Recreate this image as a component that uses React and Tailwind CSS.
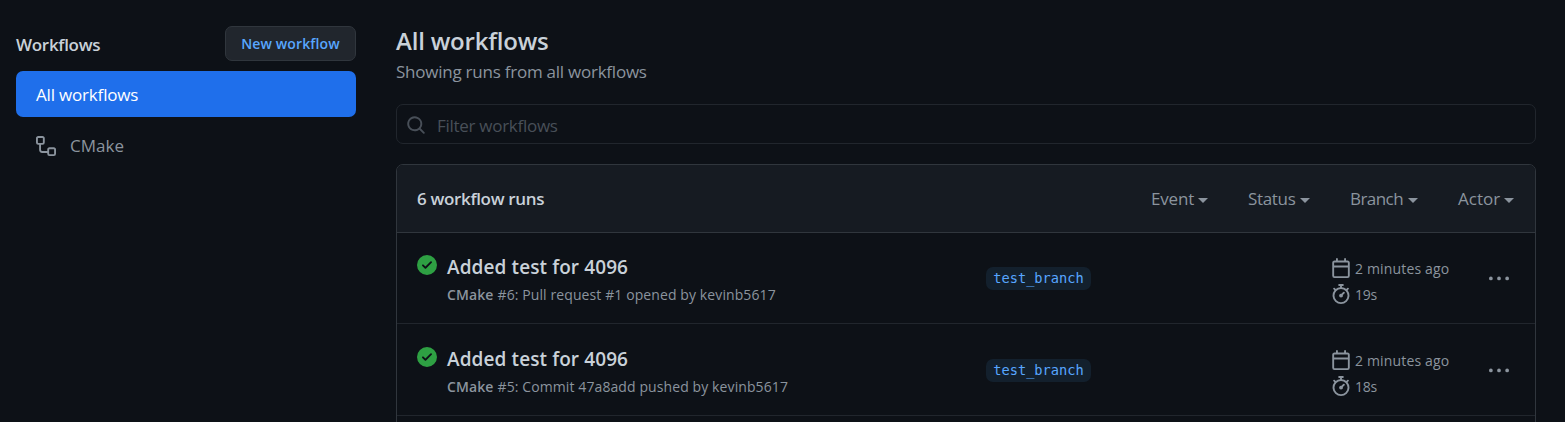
import React from 'react';

const ICONS = {
  workflow:
    'M0 1.75C0 .784.784 0 1.75 0h3.5C6.216 0 7 .784 7 1.75v3.5A1.75 1.75 0 015.25 7H4v4a1 1 0 001 1h4v-1.25C9 9.784 9.784 9 10.75 9h3.5c.966 0 1.75.784 1.75 1.75v3.5A1.75 1.75 0 0114.25 16h-3.5A1.75 1.75 0 019 14.25v-.75H5A2.5 2.5 0 012.5 11V7h-.75A1.75 1.75 0 010 5.25v-3.5zm1.75-.25a.25.25 0 00-.25.25v3.5c0 .138.112.25.25.25h3.5a.25.25 0 00.25-.25v-3.5a.25.25 0 00-.25-.25h-3.5zm9 9a.25.25 0 00-.25.25v3.5c0 .138.112.25.25.25h3.5a.25.25 0 00.25-.25v-3.5a.25.25 0 00-.25-.25h-3.5z',
  search:
    'M11.5 7a4.499 4.499 0 11-8.998 0A4.499 4.499 0 0111.5 7zm-.82 4.74a6 6 0 111.06-1.06l3.04 3.04a.75.75 0 11-1.06 1.06l-3.04-3.04z',
  success:
    'M8 16A8 8 0 108 0a8 8 0 000 16zm3.78-9.72a.75.75 0 00-1.06-1.06L6.75 9.19 5.28 7.72a.75.75 0 00-1.06 1.06l2 2a.75.75 0 001.06 0l4.5-4.5z',
  calendar:
    'M4.75 0a.75.75 0 01.75.75V2h5V.75a.75.75 0 011.5 0V2h1.25c.966 0 1.75.784 1.75 1.75v10.5A1.75 1.75 0 0113.25 16H2.75A1.75 1.75 0 011 14.25V3.75C1 2.784 1.784 2 2.75 2H4V.75A.75.75 0 014.75 0zm0 3.5h-2a.25.25 0 00-.25.25V6h11V3.75a.25.25 0 00-.25-.25h-8.5zM2.5 7.5v6.75c0 .138.112.25.25.25h10.5a.25.25 0 00.25-.25V7.5h-11z',
  stopwatch:
    'M5.75.75A.75.75 0 016.5 0h3a.75.75 0 010 1.5h-.75v1l-.001.041a6.718 6.718 0 013.464 1.435l.007-.006.75-.75a.75.75 0 111.06 1.06l-.75.75-.006.007a6.75 6.75 0 11-10.548 0L2.72 5.03l-.75-.75a.75.75 0 011.06-1.06l.75.75.007.006A6.718 6.718 0 017.25 2.541a.756.756 0 010-.041v-1H6.5a.75.75 0 01-.75-.75zM8 14.5A5.25 5.25 0 108 4a5.25 5.25 0 000 10.5zm.389-6.7l1.33-1.33a.75.75 0 111.061 1.06L9.45 8.861A1.502 1.502 0 018 10.75a1.5 1.5 0 11.389-2.95z',
  kebab:
    'M8 9a1.5 1.5 0 100-3 1.5 1.5 0 000 3zM1.5 9a1.5 1.5 0 100-3 1.5 1.5 0 000 3zm13 0a1.5 1.5 0 100-3 1.5 1.5 0 000 3z',
};

function Icon({ name, className = '' }) {
  return (
    <svg viewBox="0 0 16 16" fill="currentColor" fillRule="evenodd" aria-hidden="true" className={`size-5 shrink-0 ${className}`}>
      <path d={ICONS[name]} />
    </svg>
  );
}

const FILTERS = [
  { label: 'Event', className: 'w-[57px] tracking-[-0.19px]' },
  { label: 'Status', className: 'w-[62px] tracking-[-0.32px]' },
  { label: 'Branch', className: 'w-[68px] tracking-[-0.56px]' },
  { label: 'Actor', className: 'w-14' },
];

const RUNS = [
  { id: 6, title: 'Added test for 4096', detail: 'Pull request #1 opened by kevinb5617', branch: 'test_branch', when: '2 minutes ago', duration: '19s' },
  { id: 5, title: 'Added test for 4096', detail: 'Commit 47a8add pushed by kevinb5617', branch: 'test_branch', when: '2 minutes ago', duration: '18s' },
];

function Sidebar() {
  return (
    <aside className="w-[340px] shrink-0 pt-[26px]">
      <div className="flex h-[35px] items-center justify-between">
        <h2 className="pt-[2px] text-[17px] leading-6 font-semibold tracking-[-0.3px]">Workflows</h2>
        <button className="h-[35px] w-[131px] rounded-[7px] border border-[#30363d] bg-[#21262d] pt-px text-[14px] leading-6 font-semibold tracking-[0.12px] text-[#58a6ff]">
          New workflow
        </button>
      </div>
      <nav className="mt-[10px] text-[17px] leading-6">
        <a className="flex h-[46px] items-center rounded-[7px] bg-[#1f6feb] px-5 pt-[2px] tracking-[-0.18px] text-white">All workflows</a>
        <a className="mt-[5px] flex h-[48px] items-center gap-[14px] px-5 tracking-[0.05px] text-[#8b949e]">
          <Icon name="workflow" />
          CMake
        </a>
      </nav>
    </aside>
  );
}

function Run({ run }) {
  return (
    <li className="flex h-[92px] shrink-0 border-t border-[#21262d] px-5 pt-px first:h-[90px] first:border-t-0 first:pt-0">
      <Icon name="success" className="mt-[22px] text-[#2ea043]" />
      <div className="ml-[10px] w-[539px] shrink-0 pt-[19px]">
        <h3 className="text-[19px] leading-[30px] font-semibold tracking-[0.1px]">{run.title}</h3>
        <p className="flex gap-1 text-[14px] leading-[26px] tracking-[0.1px] text-[#8b949e]">
          <span className="font-semibold">CMake</span>
          <span>#{run.id}: {run.detail}</span>
        </p>
      </div>
      <div className="flex-1 pt-[34px]">
        <span className="flex h-[23px] w-[105px] items-center justify-center rounded-[7px] bg-[#13202d] pb-px font-['DejaVu_Sans_Mono',monospace] text-[13.7px] leading-5 text-[#58a6ff]">
          {run.branch}
        </span>
      </div>
      <div className="w-[158px] pt-[22px] text-[14px] leading-[26px] text-[#8b949e]">
        <div className="flex h-[26px] items-center gap-1 tracking-[0.16px]">
          <Icon name="calendar" />
          <span className="pt-[2px]">{run.when}</span>
        </div>
        <div className="flex h-[26px] items-center gap-1 tracking-[-0.2px]">
          <Icon name="stopwatch" />
          <span className="pt-[2px]">{run.duration}</span>
        </div>
      </div>
      <Icon name="kebab" className="mt-[36px] mr-[6px] text-[#8b949e]" />
    </li>
  );
}

export default function App() {
  return (
    <div className="flex h-[422px] gap-10 overflow-hidden bg-[#0d1117] pr-[29px] pl-4 font-['Open_Sans','Noto_Sans',sans-serif] text-[#c9d1d9]">
      <Sidebar />
      <main className="flex min-w-0 flex-1 flex-col pt-[25px]">
        <h1 className="text-[24px] leading-8 font-semibold tracking-[-0.2px]">All workflows</h1>
        <p className="text-[17px] leading-[30px] tracking-[-0.24px] text-[#8b949e]">Showing runs from all workflows</p>
        <label className="mt-[17px] flex h-10 shrink-0 items-center gap-[11px] rounded-[7px] border border-[#21262d] px-[9px] pt-[2px] text-[#484f58]">
          <Icon name="search" />
          <span className="pt-[2px] text-[17px] leading-6 tracking-[-0.28px]">Filter workflows</span>
        </label>
        <section className="mt-5 h-[300px] shrink-0 overflow-hidden rounded-t-[7px] border border-[#30363d]">
          <header className="flex h-[68px] items-center justify-between border-b border-[#30363d] bg-[#161b22] pr-[21px] pl-5 text-[17px] leading-6">
            <h2 className="font-semibold tracking-[-0.34px]">6 workflow runs</h2>
            <div className="flex gap-10 text-[#8b949e]">
              {FILTERS.map((f) => (
                <button key={f.label} className={`flex items-center justify-between ${f.className}`}>
                  {f.label}
                  <svg viewBox="0 0 10 5" fill="currentColor" className="mt-[3px] h-[5px] w-[10px] shrink-0" aria-hidden="true">
                    <path d="M0 0h10L5 5z" />
                  </svg>
                </button>
              ))}
            </div>
          </header>
          <ul>
            {RUNS.map((run) => (
              <Run key={run.id} run={run} />
            ))}
            <li className="h-10 border-t border-[#21262d]" />
          </ul>
        </section>
      </main>
    </div>
  );
}
